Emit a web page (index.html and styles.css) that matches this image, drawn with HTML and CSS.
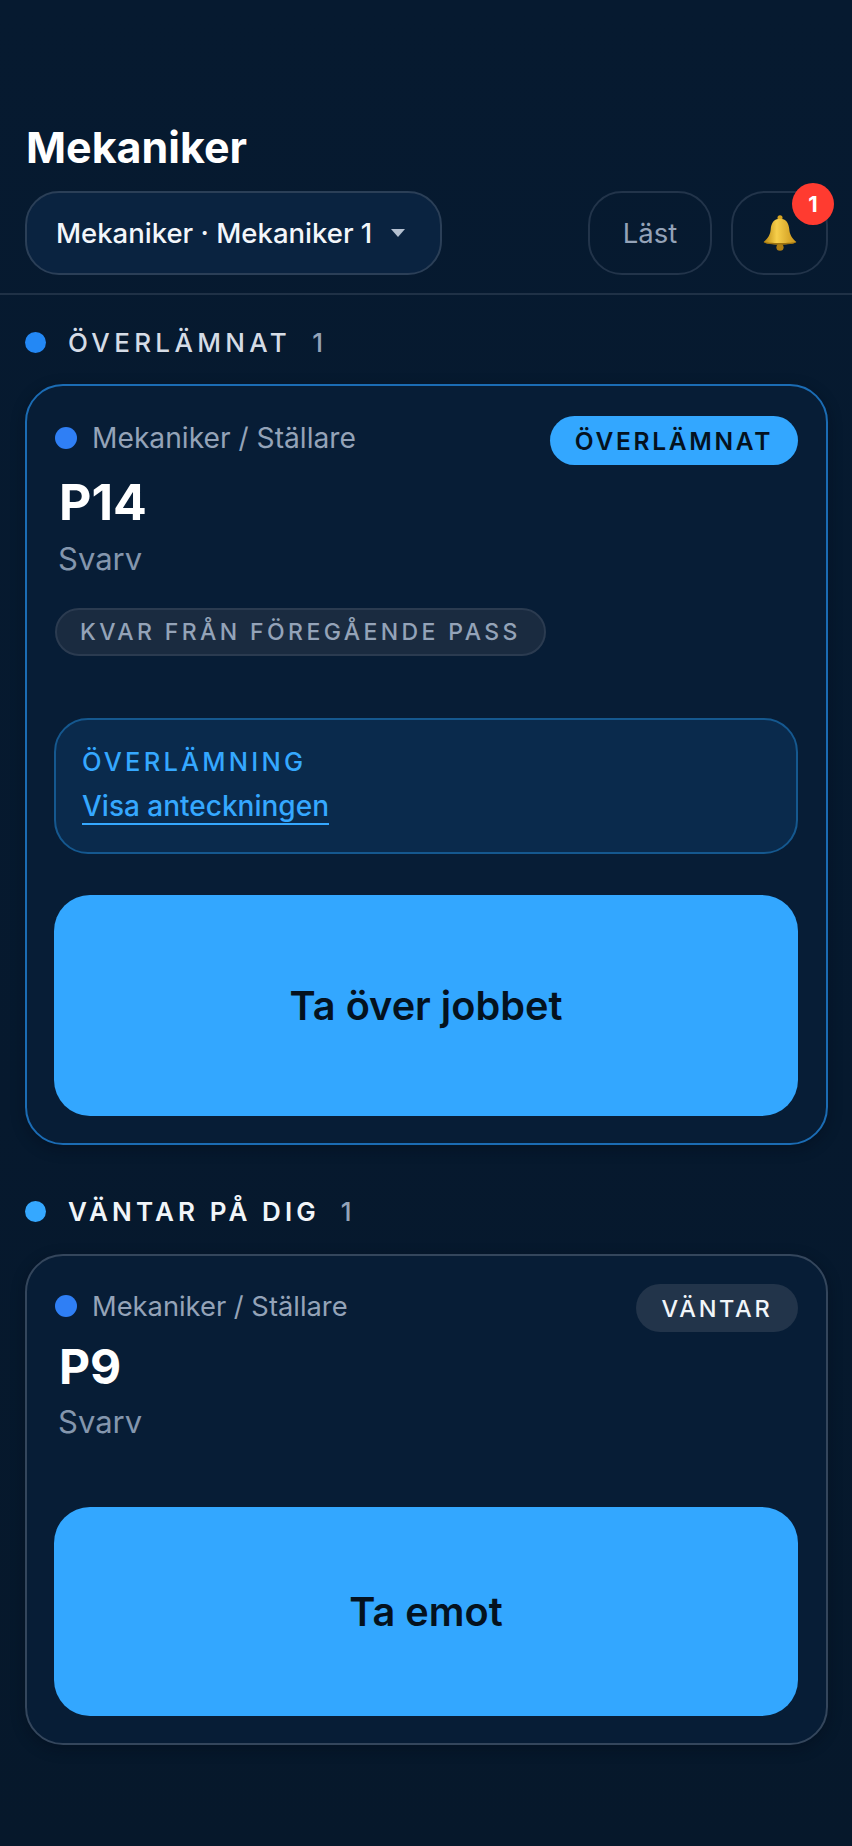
FILE: index.html
```html
<!DOCTYPE html>
<html lang="sv">
  <head>
    <meta charset="UTF-8">
    <title>Mekaniker</title>
    <link rel="stylesheet" href="styles.css">
  </head>
  <body>
  <header class="top">
    <h1>Mekaniker</h1>
    <div class="toolbar">
      <button class="picker">Mekaniker · Mekaniker 1 <span class="caret"></span></button>
      <div class="toolbar-right">
        <button class="btn-read">Läst</button>
        <button class="btn-bell">
          <svg class="bell" width="38" height="38" viewBox="0 0 36 36">
            <defs>
              <linearGradient id="bellGold" x1="0" y1="0" x2="1" y2="0">
                <stop offset="0" stop-color="#b8860f"/>
                <stop offset="0.4" stop-color="#f7cf4b"/>
                <stop offset="1" stop-color="#c8931a"/>
              </linearGradient>
            </defs>
            <circle cx="18" cy="3.500" r="2.400" fill="#d9a521"/>
            <circle cx="18" cy="31.500" r="3.400" fill="#b07f12"/>
            <path d="M18 4.500c-6 0-8.400 4.500-8.800 10-.3 4.500-2.200 8.500-6.700 12 3 3 28 3 31 0-4.500-3.500-6.400-7.500-6.700-12C26.400 9 24 4.500 18 4.500z" fill="url(#bellGold)"/>
            <path d="M2.500 26.500c3 3.400 28 3.400 31 0-3 1.200-28 1.200-31 0z" fill="#9c7210"/>
          </svg>
          <span class="badge">1</span>
        </button>
      </div>
    </div>
  </header>

  <main class="content">
    <div class="section-head">
      <span class="dot dot-blue"></span>
      <span class="section-name muted-name">ÖVERLÄMNAT</span>
      <span class="section-count">1</span>
    </div>
    <section class="card card-handover">
      <div class="card-meta">
        <div class="meta-left"><span class="meta-dot"></span><span class="meta-text">Mekaniker / Ställare</span></div>
        <span class="pill pill-blue">ÖVERLÄMNAT</span>
      </div>
      <h2 class="job">P14</h2>
      <p class="machine">Svarv</p>
      <span class="tag">KVAR FRÅN FÖREGÅENDE PASS</span>
      <div class="note">
        <div class="note-title">ÖVERLÄMNING</div>
        <a class="note-link" href="#">Visa anteckningen</a>
      </div>
      <button class="action action-tall">Ta över jobbet</button>
    </section>

    <div class="section-head second">
      <span class="dot dot-light"></span>
      <span class="section-name">VÄNTAR PÅ DIG</span>
      <span class="section-count">1</span>
    </div>
    <section class="card card-waiting">
      <div class="card-meta">
        <div class="meta-left"><span class="meta-dot"></span><span class="meta-text narrow">Mekaniker / Ställare</span></div>
        <span class="pill pill-grey">VÄNTAR</span>
      </div>
      <h2 class="job job-small">P9</h2>
      <p class="machine machine-tight">Svarv</p>
      <button class="action action-short">Ta emot</button>
    </section>
  </main>
  </body>
</html>
```

FILE: styles.css
```css
* {box-sizing: border-box;}
html, body {height: 100%;}
body {
  margin: 0;
  height: 1846px;
  overflow: hidden;
  font-family: Inter, "Liberation Sans", sans-serif;
  color: #fff;
  background: linear-gradient(180deg, #061a30 0%, #06192e 60%, #06182b 100%);
}
button {font-family: inherit; cursor: pointer;}

.top {
  padding: 122px 24px 0 25px;
  height: 295px;
  border-bottom: 2px solid #1f3146;
}
h1 {
  margin: 0 0 0 1px;
  font-size: 43px;
  line-height: 50px;
  font-weight: 700;
}
.toolbar {
  display: flex;
  justify-content: space-between;
  margin-top: 19px;
}
.toolbar-right {display: flex; gap: 19px;}
.picker {
  width: 417px;
  height: 84px;
  display: flex;
  align-items: center;
  gap: 19px;
  padding: 0 0 0 29px;
  font-size: 27.500px;
  font-weight: 500;
  color: #f3f6fa;
  background: #0a2340;
  border: 2px solid #2b3f57;
  border-radius: 34px;
}
.caret {
  width: 0;
  height: 0;
  border-left: 7px solid transparent;
  border-right: 7px solid transparent;
  border-top: 8px solid #b4c0d0;
}
.btn-read, .btn-bell {
  height: 84px;
  background: transparent;
  border: 2px solid #22344a;
  border-radius: 34px;
}
.btn-read {
  width: 124px;
  font-size: 27.500px;
  color: #94a3b8;
}
.btn-bell {
  position: relative;
  width: 97px;
  padding: 0;
}
.bell {display: block; margin: 0 auto;}
.badge {
  position: absolute;
  top: -10px;
  right: -8px;
  width: 42px;
  height: 42px;
  line-height: 42px;
  border-radius: 50%;
  background: #ff3b30;
  color: #fff;
  font-size: 22px;
  font-weight: 700;
  text-align: center;
}

.content {padding: 0 24px 0 25px;}
.section-head {
  display: flex;
  align-items: center;
  height: 48px;
  margin-top: 23px;
}
.section-head.second {margin-top: 42px;}
.dot {width: 21px; height: 21px; border-radius: 50%; margin-right: 22px;}
.dot-blue {background: #2388f5;}
.dot-light {background: #35a8ff;}
.section-name {
  font-size: 26px;
  font-weight: 600;
  letter-spacing: 4.100px;
  color: #f1f5f9;
}
.muted-name {font-weight: 500; letter-spacing: 4.350px; color: #d5dce6;}
.section-count {
  margin-left: 21px;
  font-size: 26px;
  font-weight: 500;
  color: #94a3b8;
}

.card {
  margin-top: 18px;
  padding: 30px 28px 29px 28px;
  border-radius: 38px;
  background: #071d36;
  box-shadow: 0 4px 14px rgba(3, 10, 20, 0.35);
}
.card-handover {height: 761px; border: 2px solid #1b6cb4;}
.card-waiting {height: 491px; padding-top: 28px; border: 2px solid #34465c; margin-top: 19px;}
.card-meta {
  display: flex;
  justify-content: space-between;
  align-items: flex-start;
  height: 49px;
}
.meta-left {display: flex; align-items: center; height: 44px;}
.meta-dot {
  width: 22px;
  height: 22px;
  border-radius: 50%;
  background: #2f7ff5;
  margin-right: 15px;
}
.meta-text {font-size: 28.200px; color: #94a3b8;}
.meta-text.narrow {font-size: 27.300px;}
.pill {
  display: flex;
  align-items: center;
  justify-content: center;
  border-radius: 25px;
  font-size: 24.500px;
  font-weight: 600;
  letter-spacing: 2.700px;
}
.pill-blue {width: 248px; height: 49px; background: #33a7ff; color: #04121f;}
.pill-grey {
  width: 162px;
  height: 48px;
  background: #22344a;
  color: #f1f5f9;
  font-size: 23.500px;
  font-weight: 500;
}
.job {
  margin: 7px 0 0 4px;
  font-size: 50px;
  line-height: 60px;
  font-weight: 700;
}
.job-small {margin-top: 4px; font-size: 48px;}
.machine {
  margin: 7px 0 0 3px;
  font-size: 31px;
  line-height: 40px;
  color: #8496ad;
}
.machine-tight {margin-top: 5px;}
.tag {
  display: inline-flex;
  align-items: center;
  height: 48px;
  margin-top: 29px;
  padding: 0 23px;
  font-size: 23px;
  font-weight: 500;
  letter-spacing: 3.400px;
  color: #94a3b8;
  background: #1a2b40;
  border: 2px solid #2b3b50;
  border-radius: 24px;
}
.note {
  height: 136px;
  margin-top: 62px;
  margin-left: -1px;
  padding: 27px 26px;
  background: #0a2a4c;
  border: 2px solid #15588f;
  border-radius: 34px;
}
.note-title {
  font-size: 25.500px;
  font-weight: 500;
  letter-spacing: 3.200px;
  color: #35a8ff;
  line-height: 30px;
}
.note-link {
  display: inline-block;
  margin-top: 12px;
  font-size: 28px;
  font-weight: 500;
  line-height: 34px;
  color: #35a8ff;
  text-decoration: none;
  border-bottom: 2px solid #35a8ff;
}
.action {
  display: block;
  width: calc(100% + 1px);
  margin-left: -1px;
  border: 0;
  border-radius: 36px;
  background: #33a7ff;
  color: #04121f;
  font-size: 39.700px;
  font-weight: 600;
}
.action-tall {height: 221px; margin-top: 41px;}
.action-short {height: 209px; margin-top: 65px;}
```
